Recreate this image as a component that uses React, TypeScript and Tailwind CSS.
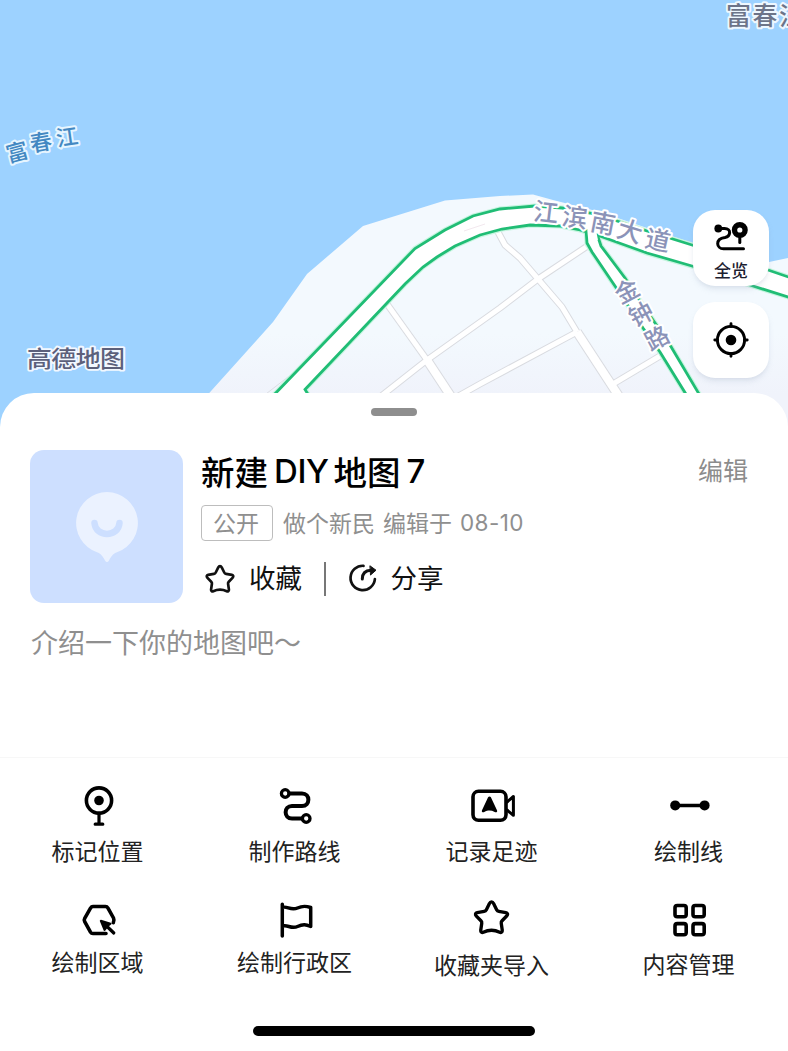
import type { ReactNode } from 'react';

interface MapGlyph {
  char: string;
  x: number;
  y: number;
  rotate: number;
}

interface ToolItem {
  label: string;
  icon: ReactNode;
  labelClass: string;
}

const ROAD_LABEL: MapGlyph[] = [
  { char: '江', x: 546, y: 212, rotate: 7 },
  { char: '滨', x: 575, y: 217, rotate: 8 },
  { char: '南', x: 603, y: 223, rotate: 11 },
  { char: '大', x: 630, y: 231, rotate: 17 },
  { char: '道', x: 658, y: 240, rotate: 12 },
];

const BRANCH_LABEL: MapGlyph[] = [
  { char: '金', x: 627, y: 291, rotate: -28 },
  { char: '钟', x: 641, y: 314, rotate: -28 },
  { char: '路', x: 657, y: 338, rotate: -28 },
];

const RIVER_LABEL: MapGlyph[] = [
  { char: '富', x: 17, y: 152, rotate: -15 },
  { char: '春', x: 41, y: 142, rotate: -10 },
  { char: '江', x: 67, y: 137, rotate: -8 },
];

const MINOR_ROADS = [
  'M387 304 L427 360',
  'M380 397 L427 360 L500 308 L538 279 L586 247',
  'M498 232 L505 245 L520 258 L538 279 L562 307 L577 332',
  'M577 332 L480 384 L455 398',
  'M613 384 L660 356',
];
const WIDE_ROADS = ['M427 360 L452 398', 'M577 332 L620 398'];

const MAIN_ROAD =
  'M270 399 L415 248.5 L445 230 L473 216 L500 209 L535 206 L562 208 L590 213 L617 221 L647 231 L692 245 L768 270 L800 281 L800 301 L788 297 L753 286 L692 266 L647 253 L597 235 L580 230 L560 226 L530 225 L502 229 L480 235 L455 246 L437 257 L423 267 L405 284 L305 389.5 L311 399 Z';
const BRANCH_ROAD =
  'M586 229 L587 243 L592 252 L615 286 L643 328 L660 352 L689 399 L702 399 L670 345 L638 298 L625 278 L601 246 L597 234';
const STAR =
  'M12 2.9 C12.7 2.9 13 3.4 13.3 4 L15 7.4 C15.3 8 15.7 8.3 16.3 8.4 L20.4 9.1 C21.4 9.3 21.7 10.3 21 11 L18.2 13.9 C17.8 14.3 17.6 14.8 17.7 15.4 L18.3 19.5 C18.4 20.5 17.6 21 16.8 20.6 C14 19.3 10 19.3 7.2 20.6 C6.4 21 5.6 20.5 5.7 19.5 L6.3 15.4 C6.4 14.8 6.2 14.3 5.8 13.9 L3 11 C2.3 10.3 2.6 9.3 3.6 9.1 L7.7 8.4 C8.3 8.3 8.7 8 9 7.4 L10.7 4 C11 3.4 11.3 2.9 12 2.9 Z';

const MapText = ({ glyphs, className, size }: { glyphs: MapGlyph[]; className: string; size: number }) => (
  <g className={className} fontSize={size} textAnchor="middle" strokeWidth="4" strokeLinejoin="round" paintOrder="stroke">
    {glyphs.map((g) => (
      <text key={g.char} transform={`translate(${g.x} ${g.y}) rotate(${g.rotate})`} y={size * 0.37}>
        {g.char}
      </text>
    ))}
  </g>
);

const MapCanvas = () => (
  <svg className="block h-[430px] w-[788px]" viewBox="0 0 788 430">
    <defs>
      <linearGradient id="land" x1="0" y1="194" x2="0" y2="394" gradientUnits="userSpaceOnUse">
        <stop offset="0.7" stopColor="#f3f9fe" />
        <stop offset="1" stopColor="#f0f3fb" />
      </linearGradient>
    </defs>
    <rect width="788" height="430" fill="#9dd2ff" />
    <path
      d="M176 430 L273 322 L307 274 L363 226 L445 200.5 L500 196 L533 194.5 L553 200 L600 212 L647 228 L693 243 L730 260 L769 262 L788 258 L788 430 Z"
      fill="url(#land)"
    />
    <g fill="none" strokeLinejoin="round">
      <path d="M262 397 L297 370" stroke="#dcdee3" strokeWidth="1" />
      <g stroke="#d9dbe0">
        {MINOR_ROADS.map((d) => <path key={d} d={d} strokeWidth="7" />)}
        {WIDE_ROADS.map((d) => <path key={d} d={d} strokeWidth="10" />)}
      </g>
      <g stroke="#ffffff">
        {MINOR_ROADS.map((d) => <path key={d} d={d} strokeWidth="5" />)}
        {WIDE_ROADS.map((d) => <path key={d} d={d} strokeWidth="8" />)}
      </g>
    </g>
    <g stroke="#c5f5df" strokeWidth="5" fill="none">
      <path d={MAIN_ROAD} />
      <path d={BRANCH_ROAD} />
    </g>
    <g stroke="#20bd75" strokeWidth="2.8" fill="#fff">
      <path d={MAIN_ROAD} />
      <path d={BRANCH_ROAD} />
    </g>
    <path d="M587.5 226 L588 238 L598 240 L595.5 228 Z" fill="#fff" />
    <path d="M464 231 L485 224" stroke="#f2e8ee" />
    <MapText glyphs={ROAD_LABEL} size={25} className="fill-[#8b93b8] stroke-white font-medium" />
    <MapText glyphs={BRANCH_LABEL} size={24} className="fill-[#8b93b8] stroke-white font-medium" />
    <MapText glyphs={RIVER_LABEL} size={22} className="fill-[#4388c2] stroke-[#e6f5ff] font-medium" />
    <text x="726" y="25" fontSize="25" letterSpacing="1.5" className="fill-[#6c7489] stroke-[#edf7ff] font-medium" strokeWidth="4" strokeLinejoin="round" paintOrder="stroke">
      富春江
    </text>
    <text transform="translate(27 367) scale(1 0.92)" fontSize="25" textLength="98" className="fill-[#5c607b] stroke-[#f2f8ff] font-medium" strokeWidth="4" strokeLinejoin="round" paintOrder="stroke">
      高德地图
    </text>
  </svg>
);

const StarIcon = ({ size, width }: { size: number; width: number }) => (
  <svg className="shrink-0" width={size} height={size} viewBox="0 0 24 24" fill="none" stroke="currentColor" strokeWidth={width} strokeLinejoin="round">
    <path d={STAR} />
  </svg>
);

const OverviewIcon = () => (
  <svg className="shrink-0" width="36" height="32" viewBox="0 0 36 32" fill="none" stroke="currentColor" strokeWidth="3" strokeLinecap="round">
    <circle cx="5.3" cy="9.5" r="3.9" fill="currentColor" stroke="none" />
    <path d="M6 9.5 L11.5 9.5 C19 9.5 17.5 17.5 12 18.5 C1.5 20 3.5 29.8 10.5 29.8 L30.5 29.8" />
    <circle cx="26.8" cy="11" r="5.3" strokeWidth="5.4" />
    <path d="M26.8 17 L26.8 23.5" />
  </svg>
);

const LocateIcon = () => (
  <svg width="36" height="36" viewBox="0 0 36 36" fill="none" stroke="currentColor" strokeWidth="2.9" strokeLinecap="round">
    <circle cx="18" cy="18" r="13.6" />
    <circle cx="18" cy="18" r="5.3" fill="currentColor" stroke="none" />
    <path d="M18 1.8 V4.5 M18 31.5 V34.2 M1.8 18 H4.5 M31.5 18 H34.2" />
  </svg>
);

const ShareIcon = () => (
  <svg width="30" height="30" viewBox="0 0 30 30" fill="none" stroke="currentColor" strokeWidth="2.7" strokeLinecap="round">
    <path d="M15.5 2.8 A12.2 12.2 0 1 0 26.9 16" />
    <path d="M14.3 16 C14.3 10.5 17 7.6 23 7.3" strokeWidth="3" />
    <path d="M22.2 3 L28 7.2 L22.8 11.8 Z" fill="currentColor" strokeWidth="1" strokeLinejoin="round" />
  </svg>
);

// all toolbar glyphs share one 46px box
const toolSvg = (children: ReactNode) => (
  <svg className="shrink-0" width="46" height="46" viewBox="0 0 46 46" fill="none" stroke="currentColor" strokeWidth="3.6" strokeLinecap="round" strokeLinejoin="round">
    {children}
  </svg>
);

const TOOLS: ToolItem[] = [
  {
    label: '标记位置',
    labelClass: 'mt-1',
    icon: toolSvg(
      <>
        <circle cx="24" cy="17.5" r="12.6" />
        <circle cx="24" cy="17.5" r="4.8" fill="currentColor" stroke="none" />
        <path d="M24 31 V41 M20.2 41.2 H27.8" strokeWidth="3.2" />
      </>,
    ),
  },
  {
    label: '制作路线',
    labelClass: 'mt-1',
    icon: toolSvg(
      <>
        <circle cx="13.2" cy="10.5" r="3.8" strokeWidth="3.3" />
        <circle cx="34.2" cy="35.5" r="3.8" strokeWidth="3.3" />
        <path d="M17.5 10.5 H30 C38.5 10.5 38.5 23 30 23 H20 C11.5 23 11.5 35.5 20 35.5 H30" strokeWidth="4" />
      </>,
    ),
  },
  {
    label: '记录足迹',
    labelClass: 'mt-1',
    icon: toolSvg(
      <>
        <rect x="4" y="8.3" width="33" height="29" rx="5.5" />
        <path d="M20.5 13.5 C21.8 13.5 22.2 14.8 22.6 15.8 L28 27.3 C28.8 29.2 27 29.7 25.7 29 C22 27.1 19 27.1 15.3 29 C14 29.7 12.2 29.2 13 27.3 L18.4 15.8 C18.8 14.8 19.2 13.5 20.5 13.5 Z" fill="currentColor" stroke="none" />
        <path d="M38 19 L44.4 13.5 V32.3 L38 27" strokeWidth="3" />
      </>,
    ),
  },
  {
    label: '绘制线',
    labelClass: 'mt-1',
    icon: toolSvg(
      <>
        <path d="M9 22.4 H38" strokeWidth="3.5" />
        <circle cx="9.2" cy="22.4" r="5" fill="currentColor" stroke="none" />
        <circle cx="38.6" cy="22.4" r="5" fill="currentColor" stroke="none" />
      </>,
    ),
  },
  {
    label: '绘制区域',
    labelClass: 'mt-[3px]',
    icon: toolSvg(
      <>
        <path d="M31 38.5 H18 C16.8 38.5 16.1 38.1 15.5 37.1 L9.7 26.7 C9 25.5 9 24.5 9.7 23.3 L15.5 13.1 C16.1 12.1 16.8 11.5 18 11.5 H30.5 C31.7 11.5 32.4 12.1 33 13.1 L38.5 23 C39.2 24.5 39.2 25.8 38.3 27.7" />
        <path d="M25.8 25.8 L35.5 28.8 L32.3 31.3 L29.6 35 Z" fill="currentColor" strokeWidth="2" />
        <path d="M31 30.5 L38.8 38" strokeWidth="3.2" />
      </>,
    ),
  },
  {
    label: '绘制行政区',
    labelClass: 'mt-[3px]',
    icon: toolSvg(
      <path d="M10.3 9.2 V41 M10.3 12.5 C15 10.5 18.5 16 25.5 13 C31 10.5 34 11 38.7 12.5 V31.5 C34 29.5 31 29 25.5 31.5 C19 34.3 15 29 10.3 31.3" strokeWidth="3.5" />
    ),
  },
  {
    label: '收藏夹导入',
    labelClass: 'mt-[6px]',
    icon: (
      <span className="flex h-[46px] shrink-0 items-start pt-[2px]">
        <StarIcon size={41} width={1.95} />
      </span>
    ),
  },
  {
    label: '内容管理',
    labelClass: 'mt-[5px]',
    icon: toolSvg(
      <>
        <rect x="9" y="10.5" width="11.2" height="11.2" rx="2.3" />
        <rect x="27" y="10.5" width="11.2" height="11.2" rx="2.3" />
        <rect x="9" y="28.6" width="11.2" height="11.2" rx="2.3" />
        <rect x="27" y="28.6" width="11.2" height="11.2" rx="2.3" />
      </>,
    ),
  },
];

const MapControls = () => (
  <div className="absolute left-[693px] top-[210px] flex flex-col gap-4 text-black">
    <button className="flex h-[76px] w-[76px] flex-col items-center rounded-[22px] bg-white pt-[9px] shadow-md shadow-slate-400/20">
      <OverviewIcon />
      <span className="mt-[7px] text-[17px] font-medium leading-[24px] text-[#1c2030]">全览</span>
    </button>
    <button className="flex h-[76px] w-[76px] items-center justify-center rounded-[22px] bg-white shadow-md shadow-slate-400/20">
      <LocateIcon />
    </button>
  </div>
);

const MapSummary = () => (
  <div className="flex px-[30px] pt-[34px]">
    <div className="flex h-[153px] w-[153px] shrink-0 items-center justify-center rounded-[14px] bg-[#cddfff]">
      <svg width="64" height="72" viewBox="0 0 64 72" fill="none">
        <path d="M32 1 A31 31 0 0 1 42 61.3 C38 62.8 36.5 65 34 69.5 C32.7 71.5 31.3 71.5 30 69.5 C27.5 65 26 62.8 22 61.3 A31 31 0 0 1 32 1 Z" fill="#ebf2ff" />
        <path d="M19.5 32 C20.5 46.5 43.5 46.5 44.5 32" stroke="#cddfff" strokeWidth="6.5" strokeLinecap="round" />
      </svg>
    </div>
    <div className="ml-[18px] min-w-0 flex-1">
      <div className="flex h-[42px] items-center justify-between">
        <h1 className="flex items-center text-[33.5px] font-medium leading-[42px] text-black">
          <span>新建</span>
          <span className="ml-[6px] mr-[5px] font-['Inter'] text-[33px] tracking-[-0.4px]">DIY</span>
          <span>地图</span>
          <span className="ml-[6px] font-['Inter'] text-[33px]">7</span>
        </h1>
        <button className="mb-[4px] mr-[10px] text-[25px] leading-[36px] text-[#8c8c8c]">编辑</button>
      </div>
      <div className="mt-[13px] flex h-[36px] items-center text-[23px] text-[#8f8f8f]">
        <span className="flex h-[36px] w-[72px] items-center justify-center rounded-[4px] border border-[#bdbdbd] pb-[2px] pr-[2px]">公开</span>
        <span className="ml-[10px] pb-[2px]">做个新民</span>
        <span className="ml-[8px] pb-[2px]">编辑于</span>
        <span className="ml-[8px] font-['Inter'] text-[22.5px] tracking-[0.4px]">08-10</span>
      </div>
      <div className="mt-[19px] flex h-[38px] items-center text-[26.5px] text-[#111]">
        <span className="ml-[2px]"><StarIcon size={34} width={1.9} /></span>
        <span className="ml-[12px] pb-[4px]">收藏</span>
        <span className="ml-[22px] h-[34px] w-[1.5px] bg-[#777]" />
        <span className="ml-[22px] pb-[2px]"><ShareIcon /></span>
        <span className="ml-[13px] pb-[4px]">分享</span>
      </div>
    </div>
  </div>
);

export default function App() {
  return (
    <div className="h-[1051px] w-[788px] overflow-hidden bg-white font-['Noto_Sans_CJK_SC',sans-serif]">
      <section className="relative h-[430px]">
        <MapCanvas />
        <MapControls />
      </section>

      <main className="relative -mt-[37px] flex h-[658px] flex-col rounded-t-[34px] bg-white">
        <div className="mx-auto mt-[15px] h-[8px] w-[46px] shrink-0 rounded-full bg-[#8e8e8e]" />
        <MapSummary />
        <p className="ml-[31px] mt-[20px] text-[27px] leading-[38px] text-[#8f8f8f]">介绍一下你的地图吧～</p>

        <nav className="mt-auto h-[294px] border-t border-[#f7f7f7] pt-[25px] text-black">
          <div className="-ml-px mr-px grid grid-cols-4 gap-y-7">
            {TOOLS.map((tool) => (
              <button key={tool.label} className="flex h-[84px] flex-col items-center">
                {tool.icon}
                <span className={`shrink-0 text-[23px] leading-[34px] text-[#222] ${tool.labelClass}`}>{tool.label}</span>
              </button>
            ))}
          </div>
          <div className="mx-auto mt-[47px] h-[10px] w-[282px] rounded-full bg-black" />
        </nav>
      </main>
    </div>
  );
}
